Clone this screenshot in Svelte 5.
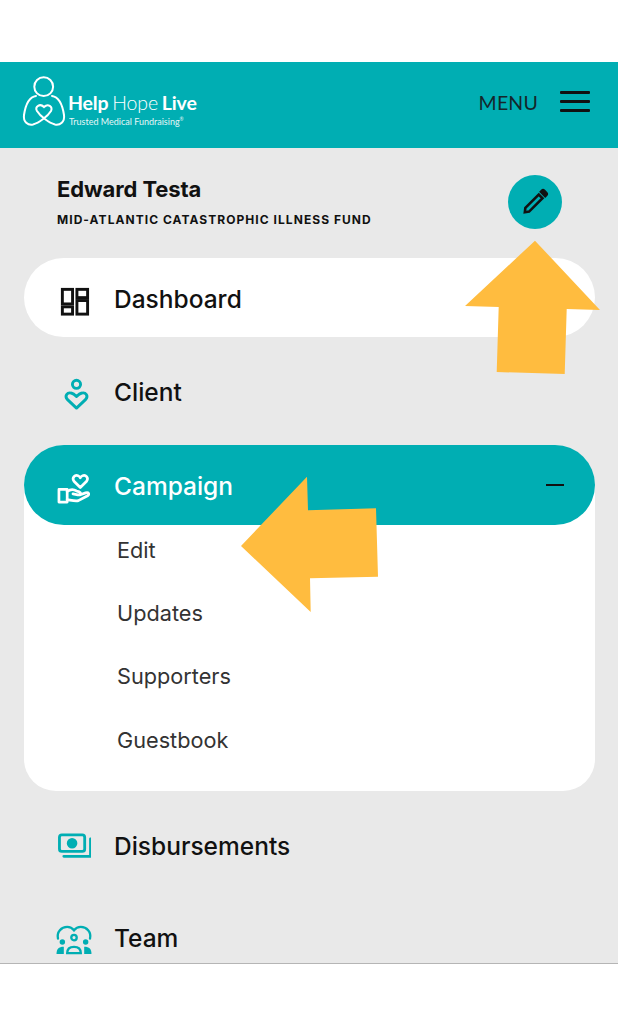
<script>
  const subItems = ['Edit', 'Updates', 'Supporters', 'Guestbook'];
</script>

<div class="page">
  <header class="header">
    <div class="logo">
      <svg class="logo-mark" viewBox="20 74 46 54" fill="none" stroke="#fff" stroke-width="2" stroke-linecap="round">
        <circle cx="42.7" cy="86.7" r="9.4" />
        <path d="M35 96C28 97 24.500 105 23 115C22 122 27 125.500 32 124.500C38 123 47 116 50 111C52 106.500 47 103 43 107C39 103 33.500 106.500 36 111C39 116 48 123 54 124.500C59 125.500 64 122 63 115C61.500 105 58 97 51 96" />
      </svg>
      <div class="logo-text">
        <div class="brand"><b>Help</b> <span>Hope</span> <b>Live</b></div>
        <div class="tag">Trusted Medical Fundraising<sup>®</sup></div>
      </div>
    </div>
    <div class="menu">
      <span>MENU</span>
      <div class="burger"><i></i><i></i><i></i></div>
    </div>
  </header>

  <main class="main">
    <section class="profile">
      <div>
        <div class="name">Edward Testa</div>
        <div class="fund">MID-ATLANTIC CATASTROPHIC ILLNESS FUND</div>
      </div>
      <div class="edit">
        <svg viewBox="0 0 28 28" width="30" height="30" fill="none" stroke="#111" stroke-width="2.400" stroke-linejoin="miter">
          <path d="M5 19.500L17.500 7L21 10.500L8.500 23L4.500 23.500Z" />
          <path d="M19.500 4.500L20.500 3.500C21 3 22 3 22.500 3.500L24.500 5.500C25 6 25 7 24.500 7.500L23.500 8.500Z" fill="#111" />
        </svg>
      </div>
    </section>

    <nav class="nav">
      <a class="row pill">
        <svg class="ico ico-dash" viewBox="0 0 34 34" fill="none" stroke="#111" stroke-width="3">
          <rect x="4.500" y="4.500" width="10.500" height="15" />
          <rect x="4.500" y="22.500" width="10.500" height="7.500" />
          <rect x="19.500" y="4.500" width="11" height="8.500" />
          <rect x="19.500" y="16" width="11" height="14" />
        </svg>
        <span>Dashboard</span>
      </a>

      <a class="row">
        <svg class="ico ico-client" viewBox="0 0 34 34" fill="none" stroke="#00aeb3" stroke-width="3">
          <circle cx="17" cy="6.500" r="4.200" />
          <path d="M17 31L7.500 22C4.500 18.500 7.500 14.500 11.500 15.500C14 16 15.500 17.500 17 19C18.500 17.500 20 16 22.500 15.500C26.500 14.500 29.500 18.500 26.500 22Z" stroke-linejoin="round" />
        </svg>
        <span>Client</span>
      </a>

      <div class="group">
        <a class="row active">
          <svg class="ico ico-camp" viewBox="0 0 34 34" fill="none" stroke="#fff" stroke-width="2.800" stroke-linejoin="round" stroke-linecap="round">
            <path d="M24 16L17.500 9.500C15 6 18.500 2 22 4C23 4.500 23.800 5.500 24 6C24.200 5.500 25 4.500 26 4C29.500 2 33 6 30.500 9.500Z" />
            <path d="M2 18H10.500V31H2Z" />
            <path d="M10.500 20C14 17.500 17 17.500 20 19.500L23 20.500C25 21.500 24 24 21.500 23.500L16.500 22.500M24 23.500L29.500 21.500C32.500 20.500 34 23 31.500 24.500L22 29.500C19 30.500 14 29 10.500 28.500" />
          </svg>
          <span>Campaign</span>
          <i class="minus"></i>
        </a>
        <ul class="subs">
          {#each subItems as item}
            <li>{item}</li>
          {/each}
        </ul>
      </div>

      <a class="row">
        <svg class="ico ico-disb" viewBox="0 0 34 34" fill="none" stroke="#00aeb3" stroke-width="2.900">
          <rect x="1.500" y="2" width="26" height="17" rx="2.500" />
          <circle cx="14.500" cy="10.500" r="4" fill="#00aeb3" />
          <path d="M6 24H33.500V6" stroke-linecap="round" />
        </svg>
        <span>Disbursements</span>
      </a>

      <a class="row row-team">
        <svg class="ico ico-team" viewBox="0 0 38 34" fill="none" stroke="#00aeb3" stroke-width="2.400">
          <path d="M2.500 15C1 8 6 3 12 3C15 3 17.500 4.500 19 6.500C20.500 4.500 23 3 26 3C32 3 37 8 35.500 15" stroke-linecap="round" />
          <circle cx="19" cy="14" r="2.800" />
          <path d="M12 30C12 25.500 14.500 23.500 19 23.500C23.500 23.500 26 25.500 26 30Z" />
          <circle cx="7" cy="18.500" r="2.800" fill="#00aeb3" stroke="none" />
          <circle cx="31" cy="18.500" r="2.800" fill="#00aeb3" stroke="none" />
          <path d="M1 31C1 26 3 23.500 8.500 23.500V31Z" fill="#00aeb3" stroke="none" />
          <path d="M37 31C37 26 35 23.500 29.500 23.500V31Z" fill="#00aeb3" stroke="none" />
        </svg>
        <span>Team</span>
      </a>
    </nav>
  </main>

  <div class="foot"></div>

  <svg class="arrows" viewBox="0 0 618 1030" width="618" height="1030">
    <polygon fill="#ffbc3f" points="535,240.700 600,310 566.700,309 564.700,374 496.700,372 498.700,307 465,306" />
    <polygon fill="#ffbc3f" points="241,546 307,476.700 308,510.300 376,508.300 378,576.700 310,578.300 310.700,612" />
  </svg>
</div>

<style>
  :global(body) { margin: 0; background: #fff; }
  .page {
    position: relative;
    width: 618px;
    height: 1030px;
    overflow: hidden;
    padding-top: 62px;
    box-sizing: border-box;
    display: flex;
    flex-direction: column;
    font-family: "Inter", "Liberation Sans", sans-serif;
    color: #111;
  }
  .header {
    height: 86px;
    flex: none;
    background: #00aeb3;
    display: flex;
    align-items: center;
    justify-content: space-between;
    padding: 0 28px 0 21px;
    font-family: "Lato", "Liberation Sans", sans-serif;
  }
  .logo { display: flex; align-items: center; gap: 1px; margin-top: -6px; }
  .logo-mark { width: 46px; height: 54px; margin-top: -2px; }
  .logo-text { color: #fff; margin-top: 15px; }
  .brand { font-size: 19.500px; line-height: 20px; letter-spacing: -0.15px; white-space: nowrap; word-spacing: -1px; }
  .brand span { font-weight: 300; }
  .brand b { font-weight: 700; }
  .tag { font-size: 9px; line-height: 11px; margin-top: 3px; margin-left: 1px; opacity: 0.9; white-space: nowrap; }
  .tag sup { font-size: 5px; line-height: 0; }
  .menu { display: flex; align-items: center; gap: 22px; margin-top: -6px; }
  .menu span { font-size: 19.500px; letter-spacing: 0.2px; color: #15262b; }
  .burger { display: flex; flex-direction: column; gap: 6px; width: 30px; margin-top: -2px; }
  .burger i { display: block; height: 3px; background: #111; border-radius: 1px; }
  .main {
    height: 815px;
    flex: none;
    background: #e9e9e9;
    overflow: hidden;
    padding: 0 23px 0 24px;
    box-sizing: border-box;
  }
  .profile {
    height: 110px;
    display: flex;
    justify-content: space-between;
    align-items: flex-start;
    box-sizing: border-box;
    padding: 28px 33px 0 33px;
  }
  .name { font-size: 22px; line-height: 26px; font-weight: 700; letter-spacing: -0.1px; }
  .fund { font-size: 12px; line-height: 14px; font-weight: 700; letter-spacing: 1.05px; margin-top: 11px; white-space: nowrap; }
  .edit {
    width: 54px;
    height: 54px;
    margin-top: -1px;
    border-radius: 50%;
    background: #00aeb3;
    display: flex;
    align-items: center;
    justify-content: center;
  }
  .nav { display: flex; flex-direction: column; gap: 14.500px; }
  .row {
    height: 79px;
    border-radius: 40px;
    display: flex;
    align-items: center;
    gap: 23px;
    padding: 0 30px 0 34px;
    font-size: 24.500px;
    font-weight: 500;
    flex: none;
  }
  .row span { padding-top: 2px; }
  .row-team { margin-top: -1.500px; }
  .pill { background: #fff; }
  .ico { width: 33px; height: 33px; flex: none; }
  .ico-dash { margin-top: 7px; }
  .ico-client { margin-top: 6px; margin-left: 2px; margin-right: -2px; }
  .ico-camp { margin-top: 6px; margin-left: -1px; margin-right: 1px; }
  .ico-disb { margin-top: 10px; }
  .ico-team { width: 38px; margin-top: 8px; margin-left: -3px; margin-right: -2px; }
  .group { height: 345.500px; flex: none; }
  .active { background: #00aeb3; color: #fff; height: 80px; position: relative; box-sizing: border-box; }
  .minus { display: block; width: 18px; height: 2.500px; background: #111; margin-left: auto; margin-right: 1px; }
  .subs {
    list-style: none;
    margin: -40px 0 0;
    padding: 33px 0 0 93px;
    height: 306px;
    box-sizing: border-box;
    background: #fff;
    border-radius: 0 0 32px 32px;
    color: #333;
    font-size: 21.700px;
  }
  .subs li { height: 63.300px; display: flex; align-items: center; font-weight: 400; }
  .foot { flex: 1; border-top: 1px solid #b5b5b5; background: #fff; }
  .arrows { position: absolute; left: 0; top: 0; z-index: 2; pointer-events: none; }
</style>
